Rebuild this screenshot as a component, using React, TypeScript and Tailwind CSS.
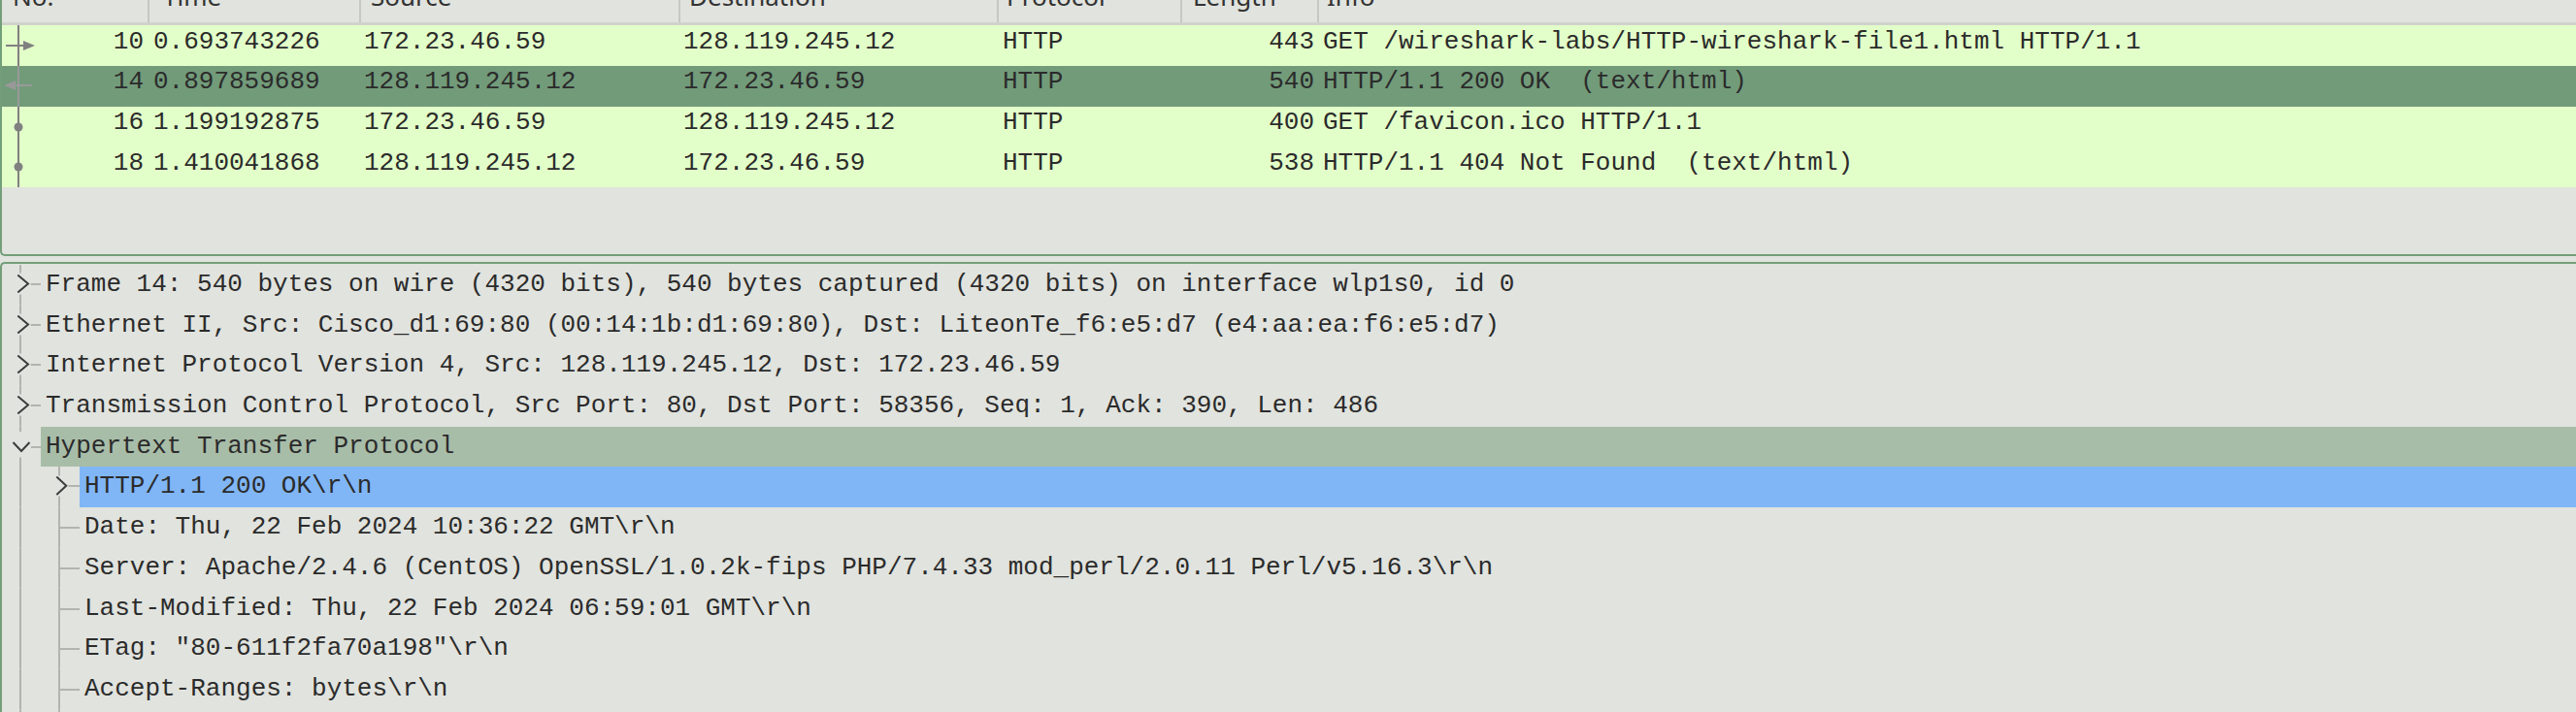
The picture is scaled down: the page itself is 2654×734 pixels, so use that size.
import React from 'react';

type Mark = 'req' | 'resp' | 'dot';

type Packet = {
  no: string;
  time: string;
  src: string;
  dst: string;
  proto: string;
  len: string;
  info: string;
  mark: Mark;
  selected?: boolean;
};

const packets: Packet[] = [
  { no: '10', time: '0.693743226', src: '172.23.46.59', dst: '128.119.245.12', proto: 'HTTP', len: '443', info: 'GET /wireshark-labs/HTTP-wireshark-file1.html HTTP/1.1', mark: 'req' },
  { no: '14', time: '0.897859689', src: '128.119.245.12', dst: '172.23.46.59', proto: 'HTTP', len: '540', info: 'HTTP/1.1 200 OK  (text/html)', mark: 'resp', selected: true },
  { no: '16', time: '1.199192875', src: '172.23.46.59', dst: '128.119.245.12', proto: 'HTTP', len: '400', info: 'GET /favicon.ico HTTP/1.1', mark: 'dot' },
  { no: '18', time: '1.410041868', src: '128.119.245.12', dst: '172.23.46.59', proto: 'HTTP', len: '538', info: 'HTTP/1.1 404 Not Found  (text/html)', mark: 'dot' },
];

type TreeNode = {
  text: string;
  level: 0 | 1;
  kind: 'closed' | 'open' | 'leaf';
  sel?: 'active' | 'inactive';
};

const tree: TreeNode[] = [
  { text: 'Frame 14: 540 bytes on wire (4320 bits), 540 bytes captured (4320 bits) on interface wlp1s0, id 0', level: 0, kind: 'closed' },
  { text: 'Ethernet II, Src: Cisco_d1:69:80 (00:14:1b:d1:69:80), Dst: LiteonTe_f6:e5:d7 (e4:aa:ea:f6:e5:d7)', level: 0, kind: 'closed' },
  { text: 'Internet Protocol Version 4, Src: 128.119.245.12, Dst: 172.23.46.59', level: 0, kind: 'closed' },
  { text: 'Transmission Control Protocol, Src Port: 80, Dst Port: 58356, Seq: 1, Ack: 390, Len: 486', level: 0, kind: 'closed' },
  { text: 'Hypertext Transfer Protocol', level: 0, kind: 'open', sel: 'inactive' },
  { text: 'HTTP/1.1 200 OK\\r\\n', level: 1, kind: 'closed', sel: 'active' },
  { text: 'Date: Thu, 22 Feb 2024 10:36:22 GMT\\r\\n', level: 1, kind: 'leaf' },
  { text: 'Server: Apache/2.4.6 (CentOS) OpenSSL/1.0.2k-fips PHP/7.4.33 mod_perl/2.0.11 Perl/v5.16.3\\r\\n', level: 1, kind: 'leaf' },
  { text: 'Last-Modified: Thu, 22 Feb 2024 06:59:01 GMT\\r\\n', level: 1, kind: 'leaf' },
  { text: 'ETag: "80-611f2fa70a198"\\r\\n', level: 1, kind: 'leaf' },
  { text: 'Accept-Ranges: bytes\\r\\n', level: 1, kind: 'leaf' },
  { text: 'Content-Length: 128\\r\\n', level: 1, kind: 'leaf' },
];

const LINE = '#b3b4af';
const CHEVRON = '#3d3d3d';

function RelatedMark({ mark, selected }: { mark: Mark; selected?: boolean }) {
  const c = selected ? '#999999' : '#808080';
  return (
    <svg className="absolute left-0 top-0" width={40} height={42}>
      <line x1={17} y1={0} x2={17} y2={42} stroke={c} strokeWidth={2} />
      {mark === 'req' && (
        <>
          <line x1={4} y1={21} x2={23} y2={21} stroke={c} strokeWidth={2} />
          <polygon points="22,16 34,21 22,26" fill={c} />
        </>
      )}
      {mark === 'resp' && (
        <>
          <line x1={13} y1={20} x2={31} y2={20} stroke={c} strokeWidth={2} />
          <polygon points="14,15 2.5,20 14,25" fill={c} />
        </>
      )}
      {mark === 'dot' && <circle cx={17} cy={21} r={4.5} fill={c} />}
    </svg>
  );
}

function PacketRow({ p }: { p: Packet }) {
  const bg = p.selected ? 'bg-[#729b7a]' : 'bg-[#e3ffc9]';
  return (
    <div className={`grid h-[41.75px] grid-cols-[150px_218px_329px_328px_189px_141px_1fr] whitespace-pre pt-[1.5px] leading-[30px] ${bg}`}>
      <div className="relative -mt-[1.5px] pt-[1.5px] pr-[4px] text-right">
        <RelatedMark mark={p.mark} selected={p.selected} />
        <span className="relative">{p.no}</span>
      </div>
      <div className="pl-[6px]">{p.time}</div>
      <div className="pl-[5px]">{p.src}</div>
      <div className="pl-[5px]">{p.dst}</div>
      <div className="pl-[6px]">{p.proto}</div>
      <div className="pr-[3px] text-right">{p.len}</div>
      <div className="pl-[6px]">{p.info}</div>
    </div>
  );
}

const headers: { label: string; cls: string }[] = [
  { label: 'No.', cls: 'pl-[11px]' },
  { label: 'Time', cls: 'border-l-2 border-[#c6c8c3] pl-[14px]' },
  { label: 'Source', cls: 'border-l-2 border-[#c6c8c3] pl-[10px]' },
  { label: 'Destination', cls: 'border-l-2 border-[#c6c8c3] pl-[9px]' },
  { label: 'Protocol', cls: 'border-l-2 border-[#c6c8c3] pl-[8px]' },
  { label: 'Length', cls: 'border-l-2 border-[#c6c8c3] pl-[11px]' },
  { label: 'Info', cls: 'border-l-2 border-[#c6c8c3] pl-[8px]' },
];

function TreeGutter({ node }: { node: TreeNode }) {
  if (node.level === 0) {
    return (
      <svg className="shrink-0" width={40} height={41.7}>
        {node.kind === 'closed' && (
          <>
            <line x1={19} y1={0} x2={19} y2={8.5} stroke={LINE} strokeWidth={2} />
            <line x1={19} y1={30.5} x2={19} y2={41.7} stroke={LINE} strokeWidth={2} />
            <polyline points="16.3,10.5 27,19.5 16.3,28.5" fill="none" stroke={CHEVRON} strokeWidth={2} />
            <line x1={29.7} y1={20} x2={40} y2={20} stroke={LINE} strokeWidth={2} />
          </>
        )}
        {node.kind === 'open' && (
          <>
            <line x1={19} y1={0} x2={19} y2={5} stroke={LINE} strokeWidth={2} />
            <line x1={19} y1={31.5} x2={19} y2={41.7} stroke={LINE} strokeWidth={2} />
            <polyline points="11.5,16 20,25 28.5,16" fill="none" stroke={CHEVRON} strokeWidth={2} />
            <line x1={30} y1={21} x2={40} y2={21} stroke={LINE} strokeWidth={2} />
          </>
        )}
      </svg>
    );
  }
  return (
    <svg className="shrink-0" width={80} height={41.7}>
      <line x1={19} y1={0} x2={19} y2={41.7} stroke={LINE} strokeWidth={2} />
      {node.kind === 'closed' ? (
        <>
          <line x1={59} y1={0} x2={59} y2={9.5} stroke={LINE} strokeWidth={2} />
          <line x1={59} y1={30.5} x2={59} y2={41.7} stroke={LINE} strokeWidth={2} />
          <polyline points="56.3,10.5 66.3,19.7 56.3,29" fill="none" stroke={CHEVRON} strokeWidth={2} />
          <line x1={68.5} y1={20} x2={80} y2={20} stroke={LINE} strokeWidth={2} />
        </>
      ) : (
        <>
          <line x1={59} y1={0} x2={59} y2={41.7} stroke={LINE} strokeWidth={2} />
          <line x1={59} y1={21} x2={80} y2={21} stroke={LINE} strokeWidth={2} />
        </>
      )}
    </svg>
  );
}

function TreeRow({ node }: { node: TreeNode }) {
  const band =
    node.sel === 'active' ? 'bg-[#80b6f6]' : node.sel === 'inactive' ? 'bg-[#a8bda8]' : '';
  return (
    <div className="flex h-[41.7px]">
      <TreeGutter node={node} />
      <div className={`flex-1 whitespace-pre pl-[5px] pt-[5px] leading-[30px] ${band}`}>{node.text}</div>
    </div>
  );
}

export default function App() {
  return (
    <div className="flex h-[734px] w-[2654px] flex-col overflow-hidden bg-[#e1e3de] font-['Liberation_Mono','DejaVu_Sans_Mono',monospace] text-[26px] text-[#2b2b2b]">
      {/* packet list */}
      <div className="flex h-[264px] shrink-0 flex-col overflow-hidden rounded-bl-[5px] border-b-2 border-l-2 border-[#739e7a]">
        <div className="grid h-[26px] shrink-0 grid-cols-[150px_218px_329px_328px_189px_141px_1fr] border-b-[3px] border-[#d0d2cd] font-['Noto_Sans',sans-serif] text-[26px] leading-[27px] text-[#333333]">
          {headers.map((h) => (
            <div key={h.label} className={`flex items-end overflow-hidden ${h.cls}`}>
              <span className="mb-[13px] whitespace-pre">{h.label}</span>
            </div>
          ))}
        </div>
        {packets.map((p) => (
          <PacketRow key={p.no} p={p} />
        ))}
      </div>

      {/* packet details */}
      <div className="mt-[6px] flex-1 overflow-hidden rounded-tl-[5px] border-l-2 border-t-2 border-[#739e7a] pt-[1px]">
        {tree.map((n, i) => (
          <TreeRow key={i} node={n} />
        ))}
      </div>
    </div>
  );
}
